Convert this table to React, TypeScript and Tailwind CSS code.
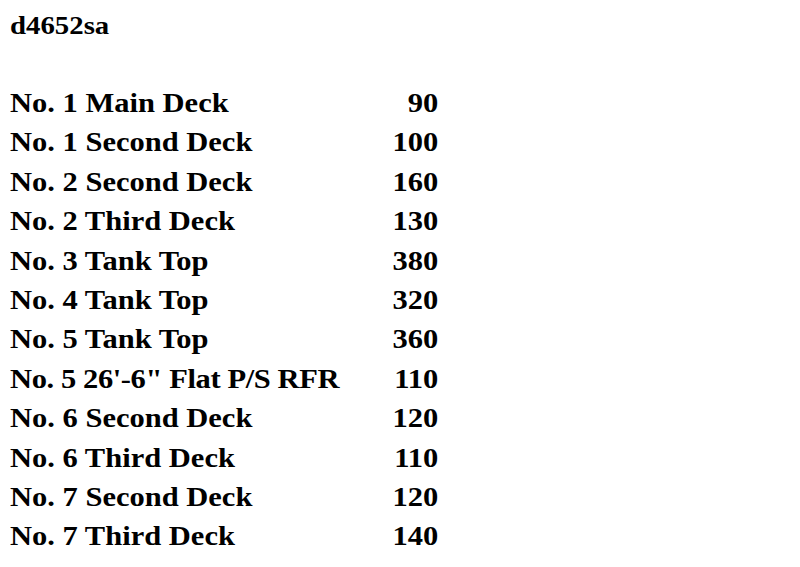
const rows: [string, string][] = [
  ['No. 1 Main Deck', '90'],
  ['No. 1 Second Deck', '100'],
  ['No. 2 Second Deck', '160'],
  ['No. 2 Third Deck', '130'],
  ['No. 3 Tank Top', '380'],
  ['No. 4 Tank Top', '320'],
  ['No. 5 Tank Top', '360'],
  ['No. 5 26\'-6" Flat P/S RFR', '110'],
  ['No. 6 Second Deck', '120'],
  ['No. 6 Third Deck', '110'],
  ['No. 7 Second Deck', '120'],
  ['No. 7 Third Deck', '140'],
];

export default function App() {
  return (
    <div className="min-h-screen overflow-hidden bg-white px-[10px] pt-[8px] font-['Liberation_Serif',serif] font-bold text-black">
      {/* the page is drawn a little wider than the type */}
      <div className="w-[400px] origin-top-left scale-x-[1.13]">
        <div className="text-[25.5px] leading-[36px]">d4652sa</div>
        <div className="mt-[40px] w-[379px]">
          {rows.map(([name, value]) => (
            <div key={name} className="flex justify-between text-[27px] leading-[39.4px]">
              <span className={name.includes('RFR') ? 'tracking-[-0.35px]' : ''}>{name}</span>
              <span>{value}</span>
            </div>
          ))}
        </div>
      </div>
    </div>
  );
}
